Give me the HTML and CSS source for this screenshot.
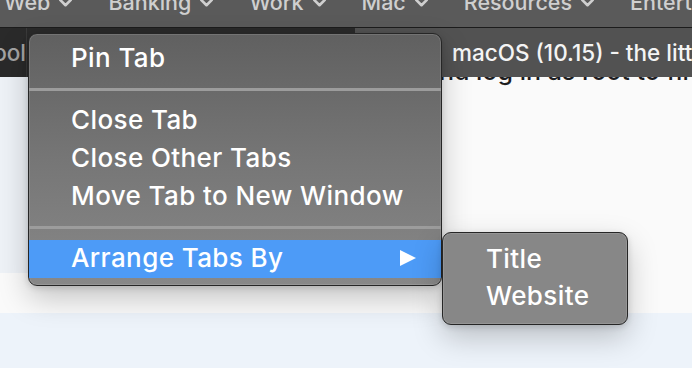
FILE: index.html
```html
<!DOCTYPE html>
<html lang="en">
<head>
    <meta charset="UTF-8">
    <meta name="viewport" content="width=device-width, initial-scale=1.0">
    <title>Safari tab menu</title>
    <link rel="stylesheet" href="styles.css">
</head>
<body>
    <div class="window">

        <!-- Favourites bar -->
        <nav class="bookmarks">
            <div class="bookmark">Web <svg class="chev" viewBox="0 0 12 8"><path d="M1 1.5 6 6.5 11 1.5"/></svg></div>
            <div class="bookmark">Banking <svg class="chev" viewBox="0 0 12 8"><path d="M1 1.5 6 6.5 11 1.5"/></svg></div>
            <div class="bookmark">Work <svg class="chev" viewBox="0 0 12 8"><path d="M1 1.5 6 6.5 11 1.5"/></svg></div>
            <div class="bookmark">Mac <svg class="chev" viewBox="0 0 12 8"><path d="M1 1.5 6 6.5 11 1.5"/></svg></div>
            <div class="bookmark">Resources <svg class="chev" viewBox="0 0 12 8"><path d="M1 1.5 6 6.5 11 1.5"/></svg></div>
            <div class="bookmark">Entertainment</div>
        </nav>

        <!-- Tab bar -->
        <div class="tabs">
            <div class="tab tab-back"><span class="tab-title">ool</span></div>
            <div class="tab tab-back tab-wide"></div>
            <div class="tab tab-active"><span class="tab-title">macOS (10.15) - the little things</span></div>
        </div>

        <!-- Page behind the menu -->
        <main class="page">
            <section class="upper">
                <aside class="side"></aside>
                <div class="article">
                    <p class="lead">and log in as root to finish</p>
                </div>
            </section>
            <section class="lower"></section>
        </main>

        <!-- Tab context menu -->
        <ul class="menu">
            <li class="item">Pin Tab</li>
            <li class="sep"></li>
            <li class="item">Close Tab</li>
            <li class="item">Close Other Tabs</li>
            <li class="item">Move Tab to New Window</li>
            <li class="sep"></li>
            <li class="item item-on">Arrange Tabs By <span class="arrow"></span></li>
        </ul>

        <ul class="menu submenu">
            <li class="item">Title</li>
            <li class="item">Website</li>
        </ul>
    </div>
</body>
</html>
```

FILE: styles.css
```css
/* Base */
body {
    margin: 0;
    padding: 0;
    font-family: 'Inter', 'Noto Sans', sans-serif;
    background: #fafafa;
    overflow: hidden;
}

.window {
    position: relative;
    width: 692px;
    height: 368px;
    overflow: hidden;
    display: flex;
    flex-direction: column;
}

/* Favourites bar */
.bookmarks {
    height: 27px;
    flex: none;
    background: #5a5a5a;
    display: flex;
    gap: 36px;
    padding-left: 4px;
    overflow: hidden;
}

.bookmark {
    display: flex;
    align-items: center;
    gap: 9px;
    margin-top: -13px;
    height: 30px;
    font-size: 21.5px;
    font-weight: 500;
    color: #cfcfcf;
    white-space: nowrap;
}

.chev {
    width: 13px;
    height: 9px;
    fill: none;
    stroke: #cfcfcf;
    stroke-width: 2.4;
    stroke-linecap: round;
    stroke-linejoin: round;
}

/* Tab bar */
.tabs {
    height: 49px;
    flex: none;
    display: flex;
    border-top: 1px solid #1c1c1c;
    position: relative;
    z-index: 2;
}

.tab {
    display: flex;
    align-items: center;
    font-size: 22.5px;
    font-weight: 500;
    white-space: nowrap;
    overflow: hidden;
}

.tab-back {
    background: #2a2a2a;
    color: #a3a3a3;
    width: 26px;
    border-right: 1px solid #3a3a3a;
    justify-content: flex-end;
}

.tab-wide {
    width: 328px;
    border-right: none;
}

.tab-active {
    flex: 1;
    background: #525252;
    color: #f4f4f4;
    padding-left: 97px;
}

/* Page content */
.page {
    flex: 1;
    display: flex;
    flex-direction: column;
}

.upper {
    height: 236px;
    display: flex;
    background: #fafafa;
}

.side {
    width: 300px;
    height: 196px;
    background: #eef2f7;
}

.article {
    padding-left: 164px;
    overflow: hidden;
}

.lead {
    margin: -21px 0 0;
    font-family: 'Inter', sans-serif;
    font-size: 25px;
    font-weight: 500;
    line-height: 30px;
    color: #1d1d1f;
    white-space: nowrap;
}

.lower {
    flex: 1;
    background: #edf3fa;
}

/* Context menus */
.menu {
    list-style: none;
    margin: 0;
    position: absolute;
    left: 28px;
    top: 33px;
    width: 412px;
    padding: 6px 0 7px;
    border: 1px solid #262626;
    border-radius: 9px;
    background: linear-gradient(180deg, #606060 0%, #767676 50%, #888 100%);
    box-shadow: inset 0 0 0 1px rgba(255, 255, 255, 0.12),
                0 12px 30px rgba(0, 0, 0, 0.22),
                0 2px 6px rgba(0, 0, 0, 0.15);
    z-index: 5;
}

.item {
    height: 38px;
    box-sizing: border-box;
    display: flex;
    align-items: center;
    padding: 0 25px 3px 42px;
    font-size: 26px;
    font-weight: 500;
    letter-spacing: 0.4px;
    color: #fff;
    white-space: nowrap;
}

.item-on {
    background: #4d9bf7;
    justify-content: space-between;
}

.arrow {
    width: 0;
    height: 0;
    border-top: 8.5px solid transparent;
    border-bottom: 8.5px solid transparent;
    border-left: 16px solid #fff;
}

.sep {
    height: 3px;
    margin: 10px 0 11px;
    background: #9c9c9c;
}

.submenu {
    left: 442px;
    top: 232px;
    width: 184px;
    padding: 8px 0 9px;
    background: #878787;
    z-index: 6;
}

.submenu .item {
    height: 37px;
    padding-left: 43px;
}
```
